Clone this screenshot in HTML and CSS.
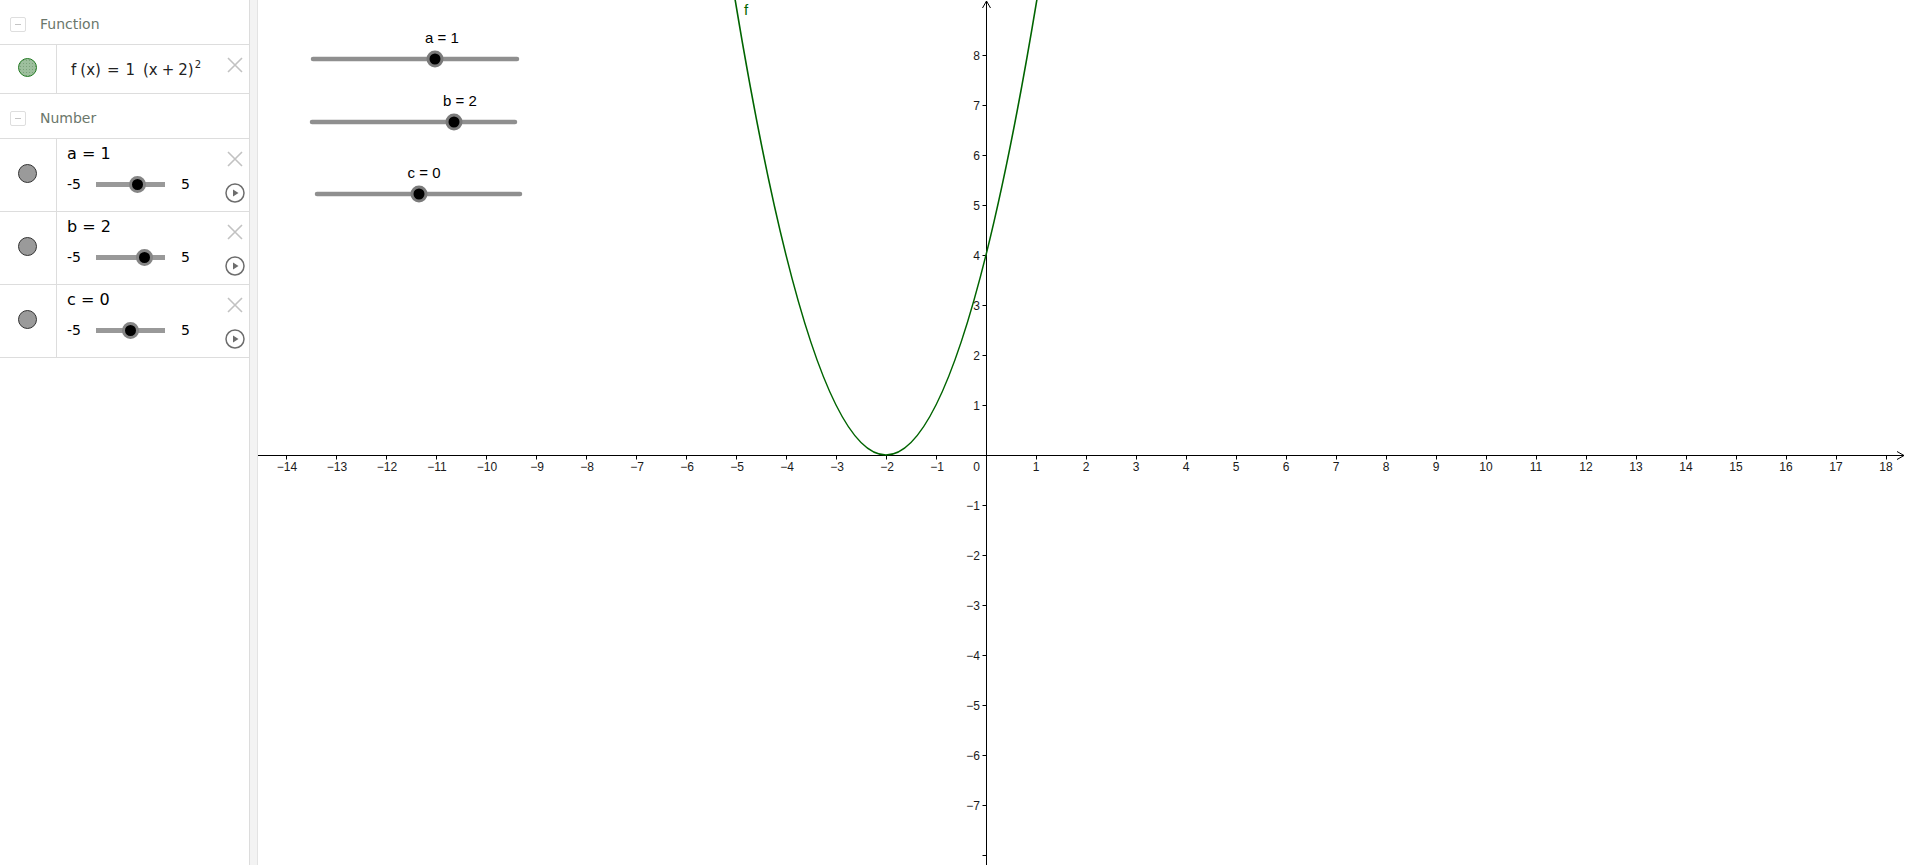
FILE: index.html
```html
<!DOCTYPE html>
<html>
<head>
<meta charset="utf-8">
<title>Graphing</title>
<link rel="stylesheet" href="styles.css">
</head>
<body>
<div class="app">
  <aside class="algebra">
    <div class="group-head">
      <span class="toggle"></span>
      <span class="group-title">Function</span>
    </div>
    <div class="item item-fn">
      <div class="marble-cell"><span class="marble marble-green"></span></div>
      <div class="item-body formula">
        <span class="f">f</span><span class="paren">(x)</span><span class="eq">=</span><span class="one">1</span><span class="paren2">(x<span class="plus">+</span>2)</span><sup class="sq">2</sup>
      </div>
      <div class="item-actions">
        <svg class="icon-x" width="16" height="16" viewBox="0 0 16 16"><path d="M1 1L15 15M15 1L1 15"/></svg>
      </div>
    </div>
    <div class="group-head">
      <span class="toggle"></span>
      <span class="group-title">Number</span>
    </div>

    <div class="item item-num">
      <div class="marble-cell"><span class="marble marble-gray"></span></div>
      <div class="item-body">
        <div class="var-name">a = 1</div>
        <div class="mini-slider">
          <span class="min">-5</span>
          <span class="track"><span class="knob" style="left:60%"></span></span>
          <span class="max">5</span>
        </div>
      </div>
      <div class="item-actions">
        <svg class="icon-x" width="16" height="16" viewBox="0 0 16 16"><path d="M1 1L15 15M15 1L1 15"/></svg>
        <svg class="icon-play" width="20" height="20" viewBox="0 0 20 20"><circle cx="10" cy="10" r="9"/><path d="M8 6.5L8 13.5L13.5 10Z"/></svg>
      </div>
    </div>

    <div class="item item-num">
      <div class="marble-cell"><span class="marble marble-gray"></span></div>
      <div class="item-body">
        <div class="var-name">b = 2</div>
        <div class="mini-slider">
          <span class="min">-5</span>
          <span class="track"><span class="knob" style="left:70%"></span></span>
          <span class="max">5</span>
        </div>
      </div>
      <div class="item-actions">
        <svg class="icon-x" width="16" height="16" viewBox="0 0 16 16"><path d="M1 1L15 15M15 1L1 15"/></svg>
        <svg class="icon-play" width="20" height="20" viewBox="0 0 20 20"><circle cx="10" cy="10" r="9"/><path d="M8 6.5L8 13.5L13.5 10Z"/></svg>
      </div>
    </div>

    <div class="item item-num">
      <div class="marble-cell"><span class="marble marble-gray"></span></div>
      <div class="item-body">
        <div class="var-name">c = 0</div>
        <div class="mini-slider">
          <span class="min">-5</span>
          <span class="track"><span class="knob" style="left:50%"></span></span>
          <span class="max">5</span>
        </div>
      </div>
      <div class="item-actions">
        <svg class="icon-x" width="16" height="16" viewBox="0 0 16 16"><path d="M1 1L15 15M15 1L1 15"/></svg>
        <svg class="icon-play" width="20" height="20" viewBox="0 0 20 20"><circle cx="10" cy="10" r="9"/><path d="M8 6.5L8 13.5L13.5 10Z"/></svg>
      </div>
    </div>
  </aside>

  <div class="splitter"></div>

  <main class="graphics">
    <svg class="canvas" width="1648" height="865" viewBox="258 0 1648 865">
      <!-- sliders -->
      <g class="g-slider">
        <line x1="313" y1="59" x2="517" y2="59"/>
        <circle cx="435" cy="59" r="7"/>
        <text x="442" y="43">a = 1</text>
      </g>
      <g class="g-slider">
        <line x1="312" y1="122" x2="515" y2="122"/>
        <circle cx="454" cy="122" r="7"/>
        <text x="460" y="106">b = 2</text>
      </g>
      <g class="g-slider">
        <line x1="317" y1="194" x2="520" y2="194"/>
        <circle cx="419" cy="194" r="7"/>
        <text x="424" y="178">c = 0</text>
      </g>

      <!-- axes -->
      <g class="axes">
        <path d="M258 455.5H1904M1897 451.5L1904 455.5L1897 459.5"/>
        <path d="M986.5 865V1M982.5 8L986.5 1L990.5 8"/>
        <path d="M286.5 455.5v4M336.5 455.5v4M386.5 455.5v4M436.5 455.5v4M486.5 455.5v4M536.5 455.5v4M586.5 455.5v4M636.5 455.5v4M686.5 455.5v4M736.5 455.5v4M786.5 455.5v4M836.5 455.5v4M886.5 455.5v4M936.5 455.5v4M1036.5 455.5v4M1086.5 455.5v4M1136.5 455.5v4M1186.5 455.5v4M1236.5 455.5v4M1286.5 455.5v4M1336.5 455.5v4M1386.5 455.5v4M1436.5 455.5v4M1486.5 455.5v4M1536.5 455.5v4M1586.5 455.5v4M1636.5 455.5v4M1686.5 455.5v4M1736.5 455.5v4M1786.5 455.5v4M1836.5 455.5v4M1886.5 455.5v4"/>
        <path d="M982.5 405.5h4M982.5 355.5h4M982.5 305.5h4M982.5 255.5h4M982.5 205.5h4M982.5 155.5h4M982.5 105.5h4M982.5 55.5h4M982.5 505.5h4M982.5 555.5h4M982.5 605.5h4M982.5 655.5h4M982.5 705.5h4M982.5 755.5h4M982.5 805.5h4M982.5 855.5h4"/>
      </g>
      <g class="xlabels">
        <text x="287" y="471">−14</text><text x="337" y="471">−13</text><text x="387" y="471">−12</text><text x="437" y="471">−11</text><text x="487" y="471">−10</text><text x="537" y="471">−9</text><text x="587" y="471">−8</text><text x="637" y="471">−7</text><text x="687" y="471">−6</text><text x="737" y="471">−5</text><text x="787" y="471">−4</text><text x="837" y="471">−3</text><text x="887" y="471">−2</text><text x="937" y="471">−1</text>
        <text x="1036" y="471">1</text><text x="1086" y="471">2</text><text x="1136" y="471">3</text><text x="1186" y="471">4</text><text x="1236" y="471">5</text><text x="1286" y="471">6</text><text x="1336" y="471">7</text><text x="1386" y="471">8</text><text x="1436" y="471">9</text><text x="1486" y="471">10</text><text x="1536" y="471">11</text><text x="1586" y="471">12</text><text x="1636" y="471">13</text><text x="1686" y="471">14</text><text x="1736" y="471">15</text><text x="1786" y="471">16</text><text x="1836" y="471">17</text><text x="1886" y="471">18</text>
      </g>
      <g class="ylabels">
        <text x="980" y="471">0</text>
        <text x="980" y="409.5">1</text><text x="980" y="359.5">2</text><text x="980" y="309.5">3</text><text x="980" y="259.5">4</text><text x="980" y="209.5">5</text><text x="980" y="159.5">6</text><text x="980" y="109.5">7</text><text x="980" y="59.5">8</text>
        <text x="980" y="509.5">−1</text><text x="980" y="559.5">−2</text><text x="980" y="609.5">−3</text><text x="980" y="659.5">−4</text><text x="980" y="709.5">−5</text><text x="980" y="759.5">−6</text><text x="980" y="809.5">−7</text>
      </g>

      <!-- function f -->
      <path class="curve" d="M734 -7.08Q886 917.08 1038 -7.08"/>
      <text class="flabel" x="744" y="15">f</text>
    </svg>
  </main>
</div>
</body>
</html>
```
FILE: styles.css
```css
html, body {
  margin: 0;
  padding: 0;
  background: #ffffff;
  overflow: hidden;
}

.app {
  display: flex;
  width: 1906px;
  height: 865px;
  font-family: "DejaVu Sans", sans-serif;
  color: #000;
}

/* ---------- Algebra view ---------- */
.algebra {
  width: 250px;
  flex: 0 0 250px;
  box-sizing: border-box;
  border-right: 1px solid #dcdcdc;
  background: #fff;
}

.group-head {
  height: 45px;
  border-bottom: 1px solid #dddddd;
  display: flex;
  align-items: center;
  padding-top: 4px;
  box-sizing: border-box;
  padding-left: 10px;
}

.toggle {
  width: 14px;
  height: 13px;
  border: 1px solid #dedede;
  border-radius: 2px;
  position: relative;
  flex: 0 0 auto;
}

.toggle::after {
  content: "";
  position: absolute;
  left: 4px;
  right: 4px;
  top: 6px;
  height: 1px;
  background: #c4c4c4;
}

.group-title {
  margin-left: 14px;
  font-size: 14px;
  color: #6b776b;
}

.item {
  display: grid;
  grid-template-columns: 57px 1fr 28px;
  border-bottom: 1px solid #dddddd;
}

.item-fn { height: 48px; }
.item-num { height: 72px; }

.marble-cell {
  border-right: 1px solid #dddddd;
  display: flex;
  align-items: center;
  justify-content: center;
  padding-right: 1px;
}

.marble {
  width: 17px;
  height: 17px;
  border-radius: 50%;
  display: block;
}

.marble-green {
  background: #9dbf9d radial-gradient(circle, rgba(60,110,60,0.35) 0.6px, transparent 0.8px) 0 0 / 3px 3px;
  border: 1px solid #237a23;
  margin-top: -4px;
}

.marble-gray {
  background: #9a9a9a;
  border: 1px solid #333;
  margin-top: -3px;
}

.item-body {
  padding-left: 10px;
  padding-top: 5px;
}

.formula {
  font-size: 15px;
  color: #222;
  display: flex;
  align-items: baseline;
  padding-top: 16px;
  padding-left: 14px;
  white-space: nowrap;
}

.formula .paren { margin-left: 4px; }
.formula .eq { margin-left: 6px; }
.formula .one { margin-left: 6px; }
.formula .paren2 { margin-left: 8px; }
.formula .plus { margin: 0 4px; }
.formula .sq {
  font-size: 10px;
  position: relative;
  top: -7px;
  margin-left: 1px;
}

.var-name {
  font-size: 16px;
  line-height: 20px;
  height: 20px;
}

.mini-slider {
  margin-top: 10px;
  height: 20px;
  display: flex;
  align-items: center;
  font-size: 14px;
}

.mini-slider .min {
  width: 29px;
}

.track {
  position: relative;
  width: 69px;
  height: 5px;
  background: #999999;
}

.knob {
  position: absolute;
  top: 50%;
  width: 11px;
  height: 11px;
  margin-left: -8.5px;
  margin-top: -8.5px;
  border-radius: 50%;
  background: #000;
  border: 3px solid #858585;
}

.mini-slider .max {
  margin-left: 16px;
}

.item-actions {
  display: flex;
  flex-direction: column;
  align-items: center;
  padding-top: 12px;
}

.icon-x path {
  stroke: #c2c2c2;
  stroke-width: 1.6;
  fill: none;
}

.icon-play {
  margin-top: 16px;
}

.icon-play circle {
  fill: none;
  stroke: #6d6d6d;
  stroke-width: 1.5;
}

.icon-play path {
  fill: #6d6d6d;
}

/* ---------- Splitter ---------- */
.splitter {
  width: 7px;
  flex: 0 0 7px;
  background: #f3f3f3;
  border-right: 1px solid #e3e3e3;
}

/* ---------- Graphics view ---------- */
.graphics {
  flex: 1 1 auto;
  overflow: hidden;
  background: #fff;
}

.canvas {
  display: block;
  font-family: "Liberation Sans", Arial, sans-serif;
}

.g-slider line {
  stroke: #8f8f8f;
  stroke-width: 4.5;
  stroke-linecap: round;
}

.g-slider circle {
  fill: #000;
  stroke: #7a7a7a;
  stroke-width: 3;
}

.g-slider text {
  font-size: 15px;
  text-anchor: middle;
  fill: #000;
}

.axes path {
  stroke: #000;
  stroke-width: 1;
  fill: none;
}

.xlabels text {
  font-size: 12px;
  text-anchor: middle;
  fill: #1a1a1a;
}

.ylabels text {
  font-size: 12px;
  text-anchor: end;
  fill: #1a1a1a;
}

.curve {
  fill: none;
  stroke: #006400;
  stroke-width: 1.6;
}

.flabel {
  font-size: 15px;
  fill: #006400;
}
```
